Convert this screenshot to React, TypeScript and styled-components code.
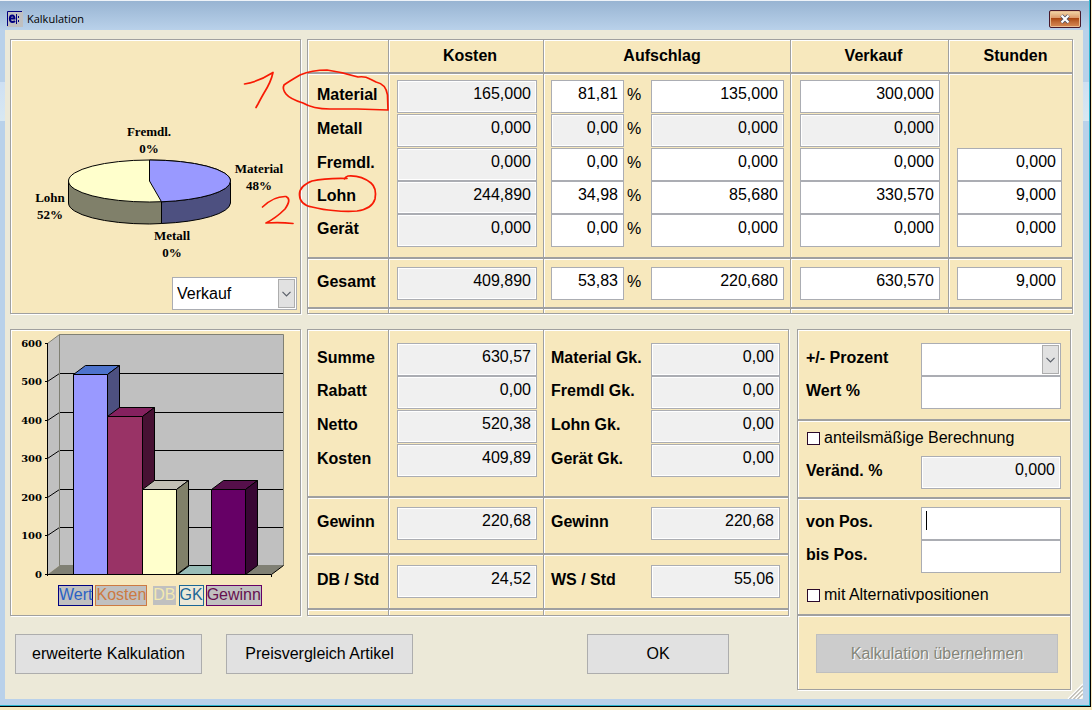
import React from "react";
import styled, { createGlobalStyle, css } from "styled-components";

const line = "#a0a0a0";
const fieldLine = "#abadb3";
const sand = "#f7e8bd";

const GlobalStyle = createGlobalStyle`
  *, *::before, *::after { box-sizing: border-box; }
  body {
    margin: 0;
    background: ${sand};
    color: #000;
    font: 16px/20px "Liberation Sans", Arial, sans-serif;
  }
  input, select, button { font: inherit; color: inherit; margin: 0; border-radius: 0; }
`;

/* ---------- window frame ---------- */

const Window = styled.div`
  position: relative;
  min-width: 1000px;
  margin-right: 1px;
  padding: 0 7px 7px 5px;
  border: solid #000;
  border-width: 0 1px 1px 0;
  background: linear-gradient(#b9d1ea 82px, #cfe0f3 82px, #d8e8f2 121px, #b9d1ea 121px);
  box-shadow: inset -1px -1px 0 #2cb5cf;
`;

const TitleBar = styled.header`
  display: flex;
  align-items: center;
  gap: 4px;
  height: 30px;
  margin: 0 -6px 0 -5px;
  padding: 6px 8px 0 7px;
  background: linear-gradient(#98b4d2, #b9d1ea);
  border-top: 1px solid #eef3f8;
`;

const Title = styled.h1`
  flex: 1;
  margin: 0;
  font: 11px/16px "Open Sans", "Noto Sans", sans-serif;
`;

const CloseButton = styled.button`
  display: flex;
  align-items: center;
  justify-content: center;
  width: 32px;
  height: 18px;
  padding: 0;
  border: 1px solid #47192b;
  border-radius: 2px;
  background: linear-gradient(#f3d9a8 0, #dd9a6c 7px, #a8430f 7px, #c06a35 11px, #d88a55 100%);
  box-shadow: inset 0 0 0 1px #e8bd92;
`;

const Body = styled.main`
  position: relative;
  display: flex;
  flex-direction: column;
  gap: 15px;
  padding: 9px 10px 9px 5px;
  background: #ece9d8;
`;

const TopRow = styled.div`
  display: flex;
  gap: 6px;
`;

const BottomRow = styled.div`
  display: flex;
  gap: 8px;
  padding-right: 2px;
`;

const BottomLeft = styled.div`
  flex: 1;
  display: flex;
  flex-direction: column;
  gap: 18px;
`;

const Panel = styled.section`
  border: 1px solid ${line};
  background: ${sand};
  box-shadow: inset 1px 1px 0 #fff, 1px 1px 0 #fff;
`;

const ChartPanel = styled(Panel)`
  flex: none;
  display: flex;
  flex-direction: column;
  width: 291px;
`;

const DataPanel = styled(Panel)`
  flex: 1;
  min-width: 0;
`;

const OptionsPanel = styled(Panel)`
  flex: none;
  width: 274px;
`;

/* ---------- fields ---------- */

const Field = styled.input<{ $caret?: boolean }>`
  display: block;
  width: 100%;
  min-width: 0;
  height: 33px;
  padding: 0 5px 5px;
  border: 1px solid ${fieldLine};
  background: #fff;
  text-align: right;
  outline: none;
  &:read-only {
    background: #f0f0f0;
    box-shadow: inset 0 0 0 1px #fff;
  }
  ${(p) =>
    p.$caret &&
    css`
      background: linear-gradient(#000, #000) 4px 3px / 1px 19px no-repeat #fff;
    `}
`;

const SelectBox = styled.div<{ $width: number }>`
  position: relative;
  width: ${(p) => p.$width}px;
  flex: none;
`;

const NativeSelect = styled.select`
  appearance: none;
  display: block;
  width: 100%;
  height: 33px;
  padding: 0 22px 0 4px;
  border: 1px solid ${fieldLine};
  background: #fff;
  outline: none;
`;

const SelectArrow = styled.span`
  position: absolute;
  top: 2px;
  right: 2px;
  bottom: 2px;
  display: flex;
  align-items: center;
  justify-content: center;
  width: 17px;
  border: 1px solid #adadad;
  background: #e1e1e1;
  pointer-events: none;
`;

function Select({ width, label, id, options }: { width: number; label?: string; id?: string; options: string[] }) {
  return (
    <SelectBox $width={width}>
      <NativeSelect id={id} aria-label={label} defaultValue={options[0]}>
        {options.map((o) => (
          <option key={o}>{o}</option>
        ))}
      </NativeSelect>
      <SelectArrow>
        <svg width="9" height="6" viewBox="0 0 9 6" fill="none" stroke="#5a5f69" strokeWidth="1.2">
          <path d="M0.5 0.8L4.5 4.8L8.5 0.8" />
        </svg>
      </SelectArrow>
    </SelectBox>
  );
}

/* ---------- data tables ---------- */

const Table = styled.table`
  width: 100%;
  table-layout: fixed;
  border-collapse: separate;
  border-spacing: 0;
`;

const Col = styled.col<{ $w: number }>`
  width: ${(p) => p.$w}px;
`;

const Row = styled.tr<{ $height: number; $top?: number; $rule?: boolean }>`
  height: ${(p) => p.$height}px;
  & > * {
    padding-top: ${(p) => p.$top ?? 0}px;
    padding-bottom: 0;
    ${(p) => p.$rule && `border-bottom: 2px solid ${line};`}
  }
`;

const cellLines = (divided?: boolean, lit?: boolean) => {
  const shadows = ["inset 1px 0 0 #fff"];
  if (lit) shadows.push("inset 0 1px 0 #fff");
  return css`
    ${divided && `border-left: 1px solid ${line};`}
    ${(divided || lit) && `box-shadow: ${divided ? shadows.join(", ") : "inset 0 1px 0 #fff"};`}
  `;
};

const HeadCell = styled.th<{ $left?: number; $right?: number; $divided?: boolean }>`
  padding-left: ${(p) => p.$left ?? 0}px;
  padding-right: ${(p) => p.$right ?? 0}px;
  ${(p) => cellLines(p.$divided, false)}
`;

const LabelCell = styled.th<{ $divided?: boolean; $lit?: boolean }>`
  padding-left: ${(p) => (p.$divided ? 7 : 9)}px;
  padding-right: 0;
  text-align: left;
  vertical-align: top;
  line-height: 30px;
  white-space: nowrap;
  ${(p) => cellLines(p.$divided, p.$lit)}
`;

const Cell = styled.td<{ $left?: number; $right?: number; $divided?: boolean; $lit?: boolean }>`
  padding-left: ${(p) => p.$left ?? 0}px;
  padding-right: ${(p) => p.$right ?? 0}px;
  vertical-align: top;
  ${(p) => cellLines(p.$divided, p.$lit)}
`;

const Markup = styled.div`
  display: grid;
  grid-template-columns: 73px 27px 1fr;
`;

const Percent = styled.span`
  padding-left: 3px;
  line-height: 30px;
`;

interface CalcRow {
  label: string;
  kosten: string;
  prozent: string;
  aufschlag: string;
  verkauf: string;
  stunden?: string;
  locked?: boolean;
  height: number;
  top?: number;
  rule?: boolean;
  lit?: boolean;
}

const calcRows: CalcRow[] = [
  { label: "Material", kosten: "165,000", prozent: "81,81", aufschlag: "135,000", verkauf: "300,000", height: 40, top: 6, lit: true },
  { label: "Metall", kosten: "0,000", prozent: "0,00", aufschlag: "0,000", verkauf: "0,000", locked: true, height: 34 },
  { label: "Fremdl.", kosten: "0,000", prozent: "0,00", aufschlag: "0,000", verkauf: "0,000", stunden: "0,000", height: 33 },
  { label: "Lohn", kosten: "244,890", prozent: "34,98", aufschlag: "85,680", verkauf: "330,570", stunden: "9,000", height: 33 },
  { label: "Gerät", kosten: "0,000", prozent: "0,00", aufschlag: "0,000", verkauf: "0,000", stunden: "0,000", height: 45, rule: true },
  { label: "Gesamt", kosten: "409,890", prozent: "53,83", aufschlag: "220,680", verkauf: "630,570", stunden: "9,000", height: 50, top: 8, rule: true, lit: true },
];

function CalculationTable() {
  return (
    <Table>
      <colgroup>
        <Col $w={80} />
        <Col $w={155} />
        <Col $w={247} />
        <Col $w={158} />
        <Col $w={124} />
      </colgroup>
      <thead>
        <Row $height={34} $rule>
          <HeadCell />
          <HeadCell scope="col" $divided $left={8}>Kosten</HeadCell>
          <HeadCell scope="col" $divided $right={10}>Aufschlag</HeadCell>
          <HeadCell scope="col" $divided $left={8}>Verkauf</HeadCell>
          <HeadCell scope="col" $divided $left={10}>Stunden</HeadCell>
        </Row>
      </thead>
      <tbody>
        {calcRows.map((r) => (
          <Row key={r.label} $height={r.height} $top={r.top} $rule={r.rule}>
            <LabelCell scope="row" $lit={r.lit}>{r.label}</LabelCell>
            <Cell $divided $lit={r.lit} $left={8} $right={6}>
              <Field aria-label={`${r.label} Kosten`} defaultValue={r.kosten} readOnly />
            </Cell>
            <Cell $divided $lit={r.lit} $left={7} $right={6}>
              <Markup>
                <Field aria-label={`${r.label} Aufschlag Prozent`} defaultValue={r.prozent} readOnly={r.locked} />
                <Percent>%</Percent>
                <Field aria-label={`${r.label} Aufschlag`} defaultValue={r.aufschlag} readOnly={r.locked} />
              </Markup>
            </Cell>
            <Cell $divided $lit={r.lit} $left={9} $right={8}>
              <Field aria-label={`${r.label} Verkauf`} defaultValue={r.verkauf} readOnly={r.locked} />
            </Cell>
            <Cell $divided $lit={r.lit} $left={8} $right={10}>
              {r.stunden && <Field aria-label={`${r.label} Stunden`} defaultValue={r.stunden} />}
            </Cell>
          </Row>
        ))}
        <Row $height={4} aria-hidden>
          <Cell $lit />
          <Cell $divided $lit />
          <Cell $divided $lit />
          <Cell $divided $lit />
          <Cell $divided $lit />
        </Row>
      </tbody>
    </Table>
  );
}

interface SumRow {
  left: [string, string];
  right: [string, string];
  height: number;
  top?: number;
  rule?: boolean;
  lit?: boolean;
}

const sumRows: SumRow[] = [
  { left: ["Summe", "630,57"], right: ["Material Gk.", "0,00"], height: 46, top: 13 },
  { left: ["Rabatt", "0,00"], right: ["Fremdl Gk.", "0,00"], height: 34 },
  { left: ["Netto", "520,38"], right: ["Lohn Gk.", "0,00"], height: 34 },
  { left: ["Kosten", "409,89"], right: ["Gerät Gk.", "0,00"], height: 54, rule: true },
  { left: ["Gewinn", "220,68"], right: ["Gewinn", "220,68"], height: 57, top: 9, rule: true, lit: true },
  { left: ["DB / Std", "24,52"], right: ["WS / Std", "55,06"], height: 55, top: 10, rule: true, lit: true },
];

function SumTable() {
  return (
    <Table>
      <colgroup>
        <Col $w={80} />
        <Col $w={155} />
        <Col $w={108} />
        <Col $w={137} />
      </colgroup>
      <tbody>
        {sumRows.map((r) => (
          <Row key={r.left[0]} $height={r.height} $top={r.top} $rule={r.rule}>
            <LabelCell scope="row" $lit={r.lit}>{r.left[0]}</LabelCell>
            <Cell $divided $lit={r.lit} $left={8} $right={6}>
              <Field aria-label={r.left[0]} defaultValue={r.left[1]} readOnly />
            </Cell>
            <LabelCell scope="row" $divided $lit={r.lit}>{r.right[0]}</LabelCell>
            <Cell $lit={r.lit} $right={8}>
              <Field aria-label={r.right[0]} defaultValue={r.right[1]} readOnly />
            </Cell>
          </Row>
        ))}
        <Row $height={5} aria-hidden>
          <Cell $lit />
          <Cell $divided $lit />
          <Cell $divided $lit />
          <Cell $lit />
        </Row>
      </tbody>
    </Table>
  );
}

/* ---------- options ---------- */

const OptionGroup = styled.div<{ $height: number; $top: number; $rule?: boolean }>`
  min-height: ${(p) => p.$height}px;
  padding: ${(p) => p.$top}px 9px 0 8px;
  ${(p) => p.$rule && `border-bottom: 2px solid ${line};`}
  box-shadow: inset 1px 1px 0 #fff;
`;

const OptionRow = styled.div`
  display: grid;
  grid-template-columns: 1fr 140px;
`;

const OptionLabel = styled.label`
  font-weight: bold;
  line-height: 30px;
`;

const CheckLabel = styled.label<{ $gap?: number }>`
  display: flex;
  align-items: center;
  gap: 4px;
  height: 20px;
  margin: ${(p) => p.$gap ?? 0}px 0 0 1px;
`;

const CheckBox = styled.input`
  appearance: none;
  width: 13px;
  height: 13px;
  border: 1px solid #2b0a2b;
  background: #fff;
  &:checked { box-shadow: inset 0 0 0 2px #fff; background: #2b0a2b; }
`;

const OptionSpacer = styled.div`
  height: 8px;
`;

/* ---------- buttons ---------- */

const ButtonBar = styled.div`
  display: flex;
  gap: 24px;
  padding: 0 60px 0 5px;
`;

const Button = styled.button<{ $width: number }>`
  width: ${(p) => p.$width}px;
  height: 40px;
  padding: 0;
  border: 1px solid #adadad;
  background: #e1e1e1;
  white-space: nowrap;
  &:last-child { margin-left: auto; }
`;

const ApplyButton = styled.button`
  display: block;
  width: 242px;
  height: 39px;
  margin: 0 3px 0 auto;
  padding: 0;
  border: 1px solid #bfbfbf;
  background: #ccc;
  &:disabled { color: #85867a; text-shadow: 1px 1px 0 #fff; }
`;

/* ---------- charts ---------- */

const PieFooter = styled.div`
  display: flex;
  justify-content: flex-end;
  padding-right: 3px;
`;

const Drawing = styled.svg`
  display: block;
`;

const PieText = styled.text`
  font: bold 13px "Liberation Serif", "Times New Roman", serif;
  text-anchor: middle;
`;

const AxisText = styled.text`
  font: bold 10px "DejaVu Serif", serif;
  text-anchor: end;
`;

const Legend = styled.ul`
  display: flex;
  gap: 2px;
  margin: 0;
  padding: 0 0 0 47px;
  list-style: none;
`;

const LegendItem = styled.li<{ $ink: string; $edge: string; $fill: string; $indent?: boolean }>`
  height: 21px;
  line-height: 18px;
  color: ${(p) => p.$ink};
  border: 1px solid ${(p) => p.$edge};
  background: ${(p) => p.$fill};
  background-clip: padding-box;
  margin-left: ${(p) => (p.$indent ? 3 : 0)}px;
`;

function PieChart() {
  return (
    <Drawing width="289" height="237" viewBox="11 40 289 237" role="img" aria-label="Anteile Verkauf">
      <g stroke="#000" strokeWidth="1" strokeLinejoin="round">
        <path d="M68.5 181V203A81 21 0 0 0 149.5 224L161.5 223.5V201.5Z" fill="#80806a" />
        <path d="M161.5 201.5V223.5A81 21 0 0 0 230.5 203V181Z" fill="#4d5080" />
        <ellipse cx="149.5" cy="181" rx="81" ry="21" fill="#ffffcc" />
        <path d="M149.5 160A81 21 0 0 1 230.5 181A81 21 0 0 1 161.5 201.8L149.5 181Z" fill="#9999ff" />
      </g>
      <PieText x="149" y="136">Fremdl.</PieText>
      <PieText x="149" y="153">0%</PieText>
      <PieText x="259" y="173">Material</PieText>
      <PieText x="259" y="190">48%</PieText>
      <PieText x="50" y="202">Lohn</PieText>
      <PieText x="50" y="219">52%</PieText>
      <PieText x="172" y="240">Metall</PieText>
      <PieText x="172" y="257">0%</PieText>
    </Drawing>
  );
}

const ticks = [
  { v: 600, y: 343.5 },
  { v: 500, y: 381.5 },
  { v: 400, y: 420.5 },
  { v: 300, y: 458.5 },
  { v: 200, y: 497.5 },
  { v: 100, y: 535.5 },
  { v: 0, y: 574.5 },
];

const bars = [
  { x: 73.5, w: 34, y: 374.5, front: "#9999ff", top: "#4d73cc", side: "#4d5080" },
  { x: 107.5, w: 35, y: 416.5, front: "#993366", top: "#85215f", side: "#471133" },
  { x: 142.5, w: 34, y: 489.5, front: "#ffffcc", top: "#c3c0b6", side: "#808069" },
  { x: 211.5, w: 34, y: 489.5, front: "#660066", top: "#550f4a", side: "#380633" },
];

function BarChart() {
  return (
    <Drawing width="289" height="255" viewBox="11 330 289 255" role="img" aria-label="Wert, Kosten, DB, GK, Gewinn">
      <path d="M47.5 343.5L59.5 334.5V565.5L47.5 574.5Z" fill="#c0c0c0" />
      <path d="M59.5 334.5H283.5V565.5H59.5Z" fill="#c0c0c0" stroke="#808074" />
      <path d="M47.5 343.5L59.5 334.5" stroke="#808074" />
      <path d="M47.5 574.5L59.5 565.5H283.5L271.5 574.5Z" fill="#808074" />
      {ticks.slice(1, 6).map((t) => (
        <path key={t.v} d={`M47.5 ${t.y}L59.5 ${t.y - 8}H283`} fill="none" stroke="#000" />
      ))}
      <path d="M59.5 334.5V565.5" stroke="#808074" />
      <path d="M177.5 574.5L189.5 565.5H223.5L211.5 574.5Z" fill="#99bdb8" stroke="#000" />
      {bars.map((b) => (
        <g key={b.x} stroke="#000" strokeLinejoin="round">
          <path d={`M${b.x} ${b.y}l12 -9h${b.w}l-12 9Z`} fill={b.top} />
          <path d={`M${b.x + b.w} ${b.y}l12 -9V565.5L${b.x + b.w} 574.5Z`} fill={b.side} />
          <path d={`M${b.x} ${b.y}h${b.w}V574.5H${b.x}Z`} fill={b.front} />
        </g>
      ))}
      <path d="M47.5 343V576M47.5 574.5H271.5V577M271.5 574.5L283.5 565.5" fill="none" stroke="#000" />
      {ticks.map((t) => (
        <g key={t.v}>
          <path d={`M45 ${t.y}H48`} stroke="#000" />
          <AxisText x="42" y={t.y + 3.5}>{t.v}</AxisText>
        </g>
      ))}
    </Drawing>
  );
}

/* ---------- overlays ---------- */

const Marks = styled.svg`
  position: absolute;
  top: 0;
  left: 0;
  pointer-events: none;
`;

const Grip = styled.svg`
  position: absolute;
  right: 0;
  bottom: 0;
`;

function PenMarks() {
  return (
    <Marks width="400" height="240" viewBox="0 0 400 240" fill="none" stroke="#f81a04" strokeWidth="1.7" strokeLinecap="round" strokeLinejoin="round" aria-hidden>
      <path d="M244.500 84Q258 82 273 72.500Q271 82 264 93Q260 100 258 104L256 107.500" />
      <path d="M284 85Q288 82 300 75Q312 70 327 70Q342 72 358 77Q365 76 370 79L376 82Q386 84 387.500 95L388 110L357 109H330Q313 109 303 103Q290 99 286 94Q282 89 284 85" />
      <path d="M262.500 207Q274 196 286 196.500Q292 199 285 209Q276 218 266 223Q280 222 293 223.500" />
      <path d="M347 178.500Q325 178 312 181Q299 186 299.500 195Q300 205 312 207Q324 210 333 210.500Q347 212 357 211Q372 209 375 199Q377 188 371 183Q361 175 348 176Q345 177 344.500 179" />
    </Marks>
  );
}

export default function App() {
  return (
    <>
      <GlobalStyle />
      <Window>
        <TitleBar>
          <svg width="16" height="16" viewBox="0 0 16 16" aria-hidden>
            <path d="M0 0H16V16H0Z" fill="#c0c0c0" />
            <path d="M0.500 15V0.500H15" fill="none" stroke="#000080" />
            <path d="M3 7.500H7.500Q7.500 4.500 5.200 4.500Q2.800 4.500 2.800 7.800Q2.800 11 5.500 11Q7 11 8 10" fill="none" stroke="#000080" strokeWidth="1.9" />
            <path d="M9.500 3V13M11.500 5V7M11.500 9V11" stroke="#000080" />
          </svg>
          <Title>Kalkulation</Title>
          <CloseButton type="button" aria-label="Schließen">
            <svg width="12" height="10" viewBox="0 0 12 10" fill="none">
              <path d="M2.500 1.500L9.500 8.500M9.500 1.500L2.500 8.500" stroke="#4c5268" strokeWidth="3.800" />
              <path d="M2.500 1.500L9.500 8.500M9.500 1.500L2.500 8.500" stroke="#fff" strokeWidth="2.200" />
            </svg>
          </CloseButton>
        </TitleBar>

        <Body>
          <TopRow>
            <ChartPanel>
              <PieChart />
              <PieFooter>
                <Select width={125} label="Diagramm" options={["Verkauf", "Kosten", "Aufschlag"]} />
              </PieFooter>
            </ChartPanel>
            <DataPanel>
              <CalculationTable />
            </DataPanel>
          </TopRow>

          <BottomRow>
            <BottomLeft>
              <TopRow>
                <ChartPanel>
                  <BarChart />
                  <Legend>
                    <LegendItem $ink="#2a62c4" $edge="#000080" $fill="#c0c0c0">Wert</LegendItem>
                    <LegendItem $ink="#cc7a42" $edge="#cc7a42" $fill="#c0c0c0">Kosten</LegendItem>
                    <LegendItem $ink="#f3e9b0" $edge="transparent" $fill="#c0c0c0" $indent>DB</LegendItem>
                    <LegendItem $ink="#1d6796" $edge="#1d6796" $fill="#ece9d8">GK</LegendItem>
                    <LegendItem $ink="#66104f" $edge="#660066" $fill="#c0c0c0">Gewinn</LegendItem>
                  </Legend>
                </ChartPanel>
                <DataPanel>
                  <SumTable />
                </DataPanel>
              </TopRow>
              <ButtonBar>
                <Button type="button" $width={187}>erweiterte Kalkulation</Button>
                <Button type="button" $width={187}>Preisvergleich Artikel</Button>
                <Button type="button" $width={142}>OK</Button>
              </ButtonBar>
            </BottomLeft>

            <OptionsPanel>
              <OptionGroup $height={91} $top={13} $rule>
                <OptionRow>
                  <OptionLabel htmlFor="prozent">+/- Prozent</OptionLabel>
                  <Select width={140} id="prozent" options={["", "+", "-"]} />
                </OptionRow>
                <OptionRow>
                  <OptionLabel htmlFor="wert">Wert %</OptionLabel>
                  <Field id="wert" />
                </OptionRow>
              </OptionGroup>
              <OptionGroup $height={78} $top={7} $rule>
                <CheckLabel>
                  <CheckBox type="checkbox" />
                  anteilsmäßige Berechnung
                </CheckLabel>
                <OptionSpacer />
                <OptionRow>
                  <OptionLabel htmlFor="veraend">Veränd. %</OptionLabel>
                  <Field id="veraend" defaultValue="0,000" readOnly />
                </OptionRow>
              </OptionGroup>
              <OptionGroup $height={117} $top={8} $rule>
                <OptionRow>
                  <OptionLabel htmlFor="von">von Pos.</OptionLabel>
                  <Field id="von" $caret />
                </OptionRow>
                <OptionRow>
                  <OptionLabel htmlFor="bis">bis Pos.</OptionLabel>
                  <Field id="bis" />
                </OptionRow>
                <CheckLabel $gap={12}>
                  <CheckBox type="checkbox" />
                  mit Alternativpositionen
                </CheckLabel>
              </OptionGroup>
              <OptionGroup $height={73} $top={18}>
                <ApplyButton type="button" disabled>Kalkulation übernehmen</ApplyButton>
              </OptionGroup>
            </OptionsPanel>
          </BottomRow>

          <Grip width="16" height="16" viewBox="0 0 16 16" fill="none" aria-hidden>
            <path d="M1 16L16 1M5 16L16 5M9 16L16 9M13 16L16 13" stroke="#fff" strokeWidth="1.500" />
            <path d="M2.500 16L16 2.500M6.500 16L16 6.500M10.500 16L16 10.500" stroke="#9a9a9a" />
          </Grip>
        </Body>
        <PenMarks />
      </Window>
    </>
  );
}
